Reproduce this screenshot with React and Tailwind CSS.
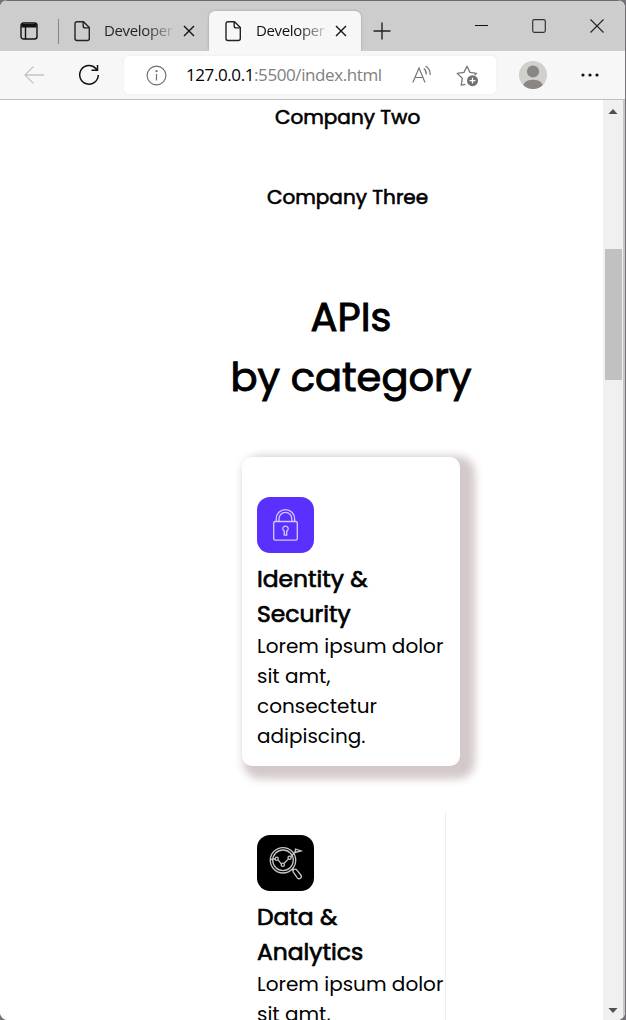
import React from "react";

function PageIcon() {
  return (
    <svg className="shrink-0" width="18" height="22" viewBox="0 0 18 22" fill="none" stroke="#222" strokeWidth="1.4" strokeLinejoin="round">
      <path d="M4 1.7h6.5l5.8 5.8v11a2 2 0 0 1-2 2H4a2 2 0 0 1-2-2V3.7a2 2 0 0 1 2-2z" />
      <path d="M10.2 1.9v4a2 2 0 0 0 2 2h4" />
    </svg>
  );
}

function CloseIcon() {
  return (
    <svg width="12" height="12" viewBox="0 0 12 12" stroke="#111" strokeWidth="1.4">
      <path d="M1 1l10 10M11 1L1 11" />
    </svg>
  );
}

function Tab({ active }) {
  return (
    <div className={active ? "h-[40px] w-[152px] rounded-t-[6px] bg-[#f7f7f7] flex items-center pl-[15px] shadow-[0_0_3px_rgba(0,0,0,0.22)]" : "h-[40px] w-[150px] flex items-center pl-[14px]"}>
      <PageIcon />
      <span className={active ? "-mt-[2px] ml-[14px] w-[69px] whitespace-nowrap text-[15px] tracking-[-0.35px] bg-linear-to-r from-[#111] from-60% to-[#d8d8d8] bg-clip-text text-transparent" : "-mt-[2px] ml-[13px] w-[69px] whitespace-nowrap text-[15px] tracking-[-0.35px] bg-linear-to-r from-[#222] from-60% to-[#bbb] bg-clip-text text-transparent"}>
        Developer
      </span>
      <span className="ml-[10px]"><CloseIcon /></span>
    </div>
  );
}

function TitleBar() {
  return (
    <div className="h-[51px] shrink-0 bg-[#cdcdcd] flex pt-[10px] border-t border-[#696873]">
      <div className="flex h-[40px] w-[59px] items-center pl-[20px]">
        <svg width="18" height="18" viewBox="0 0 18 18" fill="none" stroke="#111" strokeWidth="1.4">
          <rect x="1" y="1" width="16" height="16" rx="2.5" />
          <path d="M1.5 3h15M1.5 4.5h15" strokeWidth="2.2" />
          <path d="M5.5 5v12" />
        </svg>
        <div className="ml-[20px] h-[25px] w-px bg-[#858585]" />
      </div>
      <Tab />
      <Tab active />
      <svg className="ml-[12px] mt-[11px]" width="18" height="18" viewBox="0 0 18 18" stroke="#222" strokeWidth="1.4">
        <path d="M9 .5v17M.5 9h17" />
      </svg>
      <div className="ml-[84px] mt-[7px] flex gap-[44px]">
        <svg width="13" height="15" viewBox="0 0 13 15" stroke="#111"><path d="M0 7.5h13" /></svg>
        <svg width="14" height="16" viewBox="0 0 14 16" fill="none" stroke="#333" strokeWidth="1.2"><rect x=".7" y="1.7" width="12.6" height="12.6" rx="1.5" /></svg>
        <svg width="14" height="16" viewBox="0 0 14 16" stroke="#222" strokeWidth="1.1"><path d="M.5 1.5l13 13M13.5 1.5l-13 13" /></svg>
      </div>
    </div>
  );
}

function AddressBar() {
  return (
    <div className="flex h-[49px] shrink-0 items-center border-b border-[#bdbdbd] bg-[#f7f7f7]">
      <svg className="ml-[23px]" width="22" height="20" viewBox="0 0 22 20" fill="none" stroke="#c5c5c5" strokeWidth="1.3">
        <path d="M10.5 1.5L2 10l8.5 8.5M2 10h19" />
      </svg>
      <svg className="ml-[33px]" width="22" height="22" viewBox="0 0 22 22" fill="none" stroke="#111" strokeWidth="1.5">
        <path d="M20.3 11A9.3 9.3 0 1 1 17.8 4.5L19.5 6.2M19.5 1v5.3h-6" />
      </svg>
      <div className="ml-[24px] flex h-[38px] w-[372px] items-center rounded-[5px] bg-white shadow-[0_0_3px_rgba(0,0,0,0.05)]">
        <svg className="ml-[22px]" width="21" height="21" viewBox="0 0 21 21" fill="none" stroke="#707070" strokeWidth="1.2">
          <circle cx="10.5" cy="10.5" r="9.4" /><path d="M10.5 9v6.5" /><circle cx="10.5" cy="6.2" r=".5" fill="#707070" />
        </svg>
        <span className="ml-[19px] w-[197px] whitespace-nowrap text-[17px] tracking-[-0.41px] text-black">127.0.0.1<span className="text-[#808080]">:5500/index.html</span></span>
        <svg className="ml-[29px]" width="20" height="20" viewBox="0 0 20 20" fill="none" stroke="#777" strokeWidth="1.2">
          <path d="M.8 17.5L7 3l6 14.5M3 12.5h8M11.8 3.5a7 7 0 0 1 2.5 6M13.5.9a10 10 0 0 1 4.7 9" />
        </svg>
        <svg className="ml-[24px] mt-[1px]" width="23" height="22" viewBox="0 0 23 22" fill="none" stroke="#777" strokeWidth="1.3" strokeLinejoin="round">
          <path d="M9.5 19.3L5.2 20.2 6.3 13.3 1.2 8.4 8 7.4 11 1.3 14 7.4 20.5 8.4 18.5 10.3" />
          <circle cx="16.5" cy="15.7" r="5.5" fill="#707070" stroke="none" />
          <path d="M16.5 12.8v5.8M13.6 15.7h5.8" stroke="white" />
        </svg>
      </div>
      <svg className="ml-[23px]" width="28" height="28" viewBox="0 0 28 28">
        <circle cx="14" cy="14" r="14" fill="#d2d0cc" />
        <circle cx="14" cy="10.5" r="6.1" fill="#8b8683" />
        <path d="M4.2 24A10.2 7.2 0 0 1 23.8 24A14 14 0 0 1 4.2 24z" fill="#8b8683" />
      </svg>
      <svg className="ml-[34px]" width="18" height="4" viewBox="0 0 18 4" fill="#111"><circle cx="2" cy="2" r="1.6" /><circle cx="9" cy="2" r="1.6" /><circle cx="16" cy="2" r="1.6" /></svg>
    </div>
  );
}

function LockIcon() {
  return (
    <svg width="57" height="56" viewBox="0 0 57 56" fill="none" stroke="#d3c8ff" strokeWidth="1.3">
      <rect x="16.7" y="24.5" width="23.6" height="18.7" rx="1.4" />
      <path d="M19.2 24.5v-2.7a9.2 9.2 0 0 1 18.4 0v2.7M22 24.5v-2.7a6.4 6.4 0 0 1 12.8 0v2.7" />
      <path d="M27.3 34.2a2.7 2.7 0 1 1 2.4 0v4h-2.4z" />
    </svg>
  );
}

function AnalyticsIcon() {
  return (
    <svg width="57" height="56" viewBox="0 0 57 56" fill="none" stroke="#c6c6c6" strokeWidth="1.3">
      <circle cx="26" cy="25.3" r="12.7" />
      <circle cx="26" cy="25.3" r="10.3" />
      <path d="M34.6 35.2l1.8-1.8M36 36.7a2.2 2.2 0 0 1 3.3-2.3l4.5 5.6a2.2 2.2 0 0 1-3.5 2.8z" />
      <path d="M14 24.5l4-.5M21.3 25.2l3 3.7M27.2 28.3l4-4.2M34 21.5l4-4.5M38.5 14.2l5.5 1.7-6 1.6z" />
      <circle cx="19.7" cy="23.8" r="1.6" /><circle cx="25.8" cy="29.8" r="1.6" /><circle cx="32.6" cy="22.8" r="1.6" />
    </svg>
  );
}

function Line({ children }) {
  return <span className="block whitespace-nowrap">{children}</span>;
}

function Content() {
  return (
    <main className="w-[603px] shrink-0 overflow-hidden bg-white font-['Poppins','Inter',sans-serif] text-black">
      <p className="ml-[275px] mt-[2px] whitespace-nowrap text-[20px] leading-[30px] [-webkit-text-stroke:0.6px_black]">Company Two</p>
      <p className="ml-[267px] mt-[50px] whitespace-nowrap text-[20px] leading-[30px] [-webkit-text-stroke:0.6px_black]">Company Three</p>
      <h1 className="ml-[201px] mt-[75px] w-[300px] text-center text-[40px] leading-[60px] [-webkit-text-stroke:1px_black]">
        <Line>APIs</Line>
        <Line>by category</Line>
      </h1>
      <section className="ml-[242px] mt-[50px] h-[309px] w-[218px] rounded-[10px] bg-white pl-[15px] pt-[40px] shadow-[8px_6px_8px_7px_#d4c9c9]">
        <div className="h-[56px] w-[57px] rounded-[13px] bg-[#5a30ff]"><LockIcon /></div>
        <h2 className="mt-[8px] text-[23.4px] leading-[35px] [-webkit-text-stroke:0.7px_black]">
          <Line>Identity &amp;</Line>
          <Line>Security</Line>
        </h2>
        <p className="text-[20px] leading-[30px]">
          <Line>Lorem ipsum dolor</Line>
          <Line>sit amt,</Line>
          <Line>consectetur</Line>
          <Line>adipiscing.</Line>
        </p>
      </section>
      <section className="ml-[257px] mt-[45px] h-[300px] w-[189px] border-r border-[#eeeeee] pt-[24px]">
        <div className="h-[56px] w-[57px] rounded-[13px] bg-black"><AnalyticsIcon /></div>
        <h2 className="mt-[8px] text-[23.4px] leading-[35px] [-webkit-text-stroke:0.7px_black]">
          <Line>Data &amp;</Line>
          <Line>Analytics</Line>
        </h2>
        <p className="text-[20px] leading-[30px]">
          <Line>Lorem ipsum dolor</Line>
          <Line>sit amt,</Line>
        </p>
      </section>
    </main>
  );
}

export default function App() {
  return (
    <div className="h-[1020px] w-[626px] overflow-hidden bg-[#77727a]">
      <div className="flex h-[1020px] w-[625px] flex-col overflow-hidden rounded-[8px] bg-white font-['Segoe_UI','Open_Sans',sans-serif]">
        <TitleBar />
        <AddressBar />
        <div className="flex h-[920px] overflow-hidden">
          <Content />
          <aside className="flex w-[22px] flex-col items-center border-r-2 border-[#c9c5c5] bg-[#f0f0f0]">
            <svg className="mt-[9px]" width="10" height="5" viewBox="0 0 10 5" fill="#505050"><path d="M.5 5L5 0l4.5 5z" /></svg>
            <div className="ml-px mt-[135px] h-[131px] w-[17px] bg-[#c1c1c1]" />
            <svg className="mt-auto mb-[7px]" width="10" height="5" viewBox="0 0 10 5" fill="#505050"><path d="M.5 0h9L5 5z" /></svg>
          </aside>
        </div>
      </div>
    </div>
  );
}
